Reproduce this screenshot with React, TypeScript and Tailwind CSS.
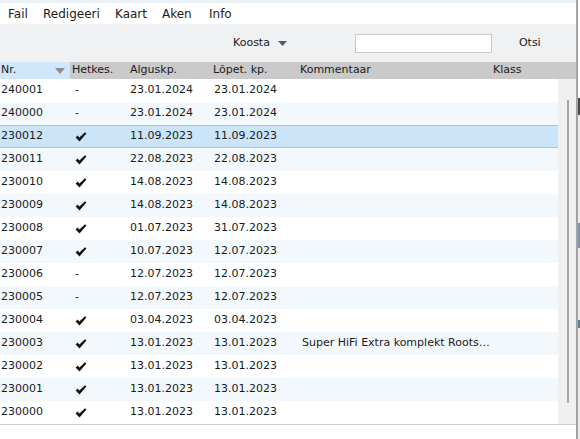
type Row = {
  nr: string
  done: boolean
  start: string
  end: string
  note?: string
}

const rows: Row[] = [
  { nr: '240001', done: false, start: '23.01.2024', end: '23.01.2024' },
  { nr: '240000', done: false, start: '23.01.2024', end: '23.01.2024' },
  { nr: '230012', done: true, start: '11.09.2023', end: '11.09.2023' },
  { nr: '230011', done: true, start: '22.08.2023', end: '22.08.2023' },
  { nr: '230010', done: true, start: '14.08.2023', end: '14.08.2023' },
  { nr: '230009', done: true, start: '14.08.2023', end: '14.08.2023' },
  { nr: '230008', done: true, start: '01.07.2023', end: '31.07.2023' },
  { nr: '230007', done: true, start: '10.07.2023', end: '12.07.2023' },
  { nr: '230006', done: false, start: '12.07.2023', end: '12.07.2023' },
  { nr: '230005', done: false, start: '12.07.2023', end: '12.07.2023' },
  { nr: '230004', done: true, start: '03.04.2023', end: '03.04.2023' },
  { nr: '230003', done: true, start: '13.01.2023', end: '13.01.2023', note: 'Super HiFi Extra komplekt Roots…' },
  { nr: '230002', done: true, start: '13.01.2023', end: '13.01.2023' },
  { nr: '230001', done: true, start: '13.01.2023', end: '13.01.2023' },
  { nr: '230000', done: true, start: '13.01.2023', end: '13.01.2023' },
]

const SELECTED = 2

function rowClass(i: number) {
  if (i === SELECTED) return 'bg-[#cce4f7] border-y border-[#9cc8ee]'
  return i % 2 === 1 ? 'bg-[#f3f8fd]' : 'bg-white'
}

function Check() {
  return (
    <svg width="12" height="10" viewBox="0 0 12 10" className="block">
      <path d="M0.6 5.4 L2.6 3.6 L4.4 5.6 L10 0.2 L11.4 1.6 L4.5 9.4 Z" fill="#111" />
    </svg>
  )
}

export default function App() {
  return (
    <div className="w-[580px] h-[439px] overflow-hidden flex bg-white text-[#1a1a1a] font-['DejaVu_Sans',sans-serif]">
      <main className="w-[576px] flex flex-col">
        <div className="h-[3px] bg-[#eaf1f7]" />

        {/* menu bar */}
        <nav className="h-[21px] bg-white flex items-center pl-[8px] text-[12px]">
          <span className="w-[35px]">Fail</span>
          <span className="w-[72px]">Redigeeri</span>
          <span className="w-[47px]">Kaart</span>
          <span className="w-[47px]">Aken</span>
          <span>Info</span>
        </nav>

        {/* toolbar */}
        <div className="h-[38px] bg-[#f0f1f3] flex items-center text-[11px]">
          <span className="ml-[233px]">Koosta</span>
          <svg width="9" height="5" viewBox="0 0 9 5" className="ml-[8px] mt-[1px]">
            <path d="M0 0h9L4.5 5z" fill="#5a5a5a" />
          </svg>
          <div className="ml-[68px] w-[137px] h-[19px] bg-white border border-[#c9c9c9]" />
          <span className="ml-[27px]">Otsi</span>
        </div>

        {/* column headers */}
        <div className="h-[17px] bg-[#cacaca] flex items-center text-[11px]">
          <div className="w-[70px] h-full bg-[#d0e6fa] flex items-center justify-between pl-[1px] pr-[5px]">
            <span>Nr.</span>
            <svg width="10" height="6" viewBox="0 0 10 6">
              <path d="M0 0h10L5 6z" fill="#8e8e8e" />
            </svg>
          </div>
          <div className="w-[58px] pl-[2px]">Hetkes.</div>
          <div className="w-[83px] pl-[2px]">Alguskp.</div>
          <div className="w-[88px] pl-[2px]">Lõpet. kp.</div>
          <div className="w-[192px] pl-[1px]">Kommentaar</div>
          <div className="pl-[2px]">Klass</div>
        </div>

        {/* table body with scrollbar */}
        <div className="h-[345px] flex">
          <div className="w-[558px] flex flex-col text-[11px]">
            {rows.map((r, i) => (
              <div key={r.nr} className={`h-[23px] flex items-center ${rowClass(i)}`}>
                <div className="w-[70px] pl-[1px]">{r.nr}</div>
                <div className="w-[58px] pl-[5px]">{r.done ? <Check /> : <span>-</span>}</div>
                <div className="w-[83px] pl-[2px]">{r.start}</div>
                <div className="w-[88px] pl-[3px]">{r.end}</div>
                <div className="w-[192px] pl-[3px] whitespace-nowrap">{r.note}</div>
              </div>
            ))}
          </div>
          <div className="w-[18px] bg-[#f0f0f0] pt-[21px] pl-[9px]">
            <div className="w-[2px] h-[303px] bg-[#a6a6a6]" />
          </div>
        </div>

        <div className="h-px bg-[#cfcfcf]" />
        <div className="flex-1 bg-white" />
      </main>

      {/* window edge and the window behind it */}
      <div className="w-[2px] bg-[#a3a3a3]" />
      <div className="w-[2px] flex flex-col bg-[#ececec]">
        <div className="h-[98px] bg-white" />
        <div className="h-[17px] bg-[#4b4b4b]" />
        <div className="h-[108px]" />
        <div className="h-[25px] bg-[#7793b3]" />
        <div className="h-[72px]" />
        <div className="h-[8px] bg-[#6a7f99]" />
      </div>
    </div>
  )
}
